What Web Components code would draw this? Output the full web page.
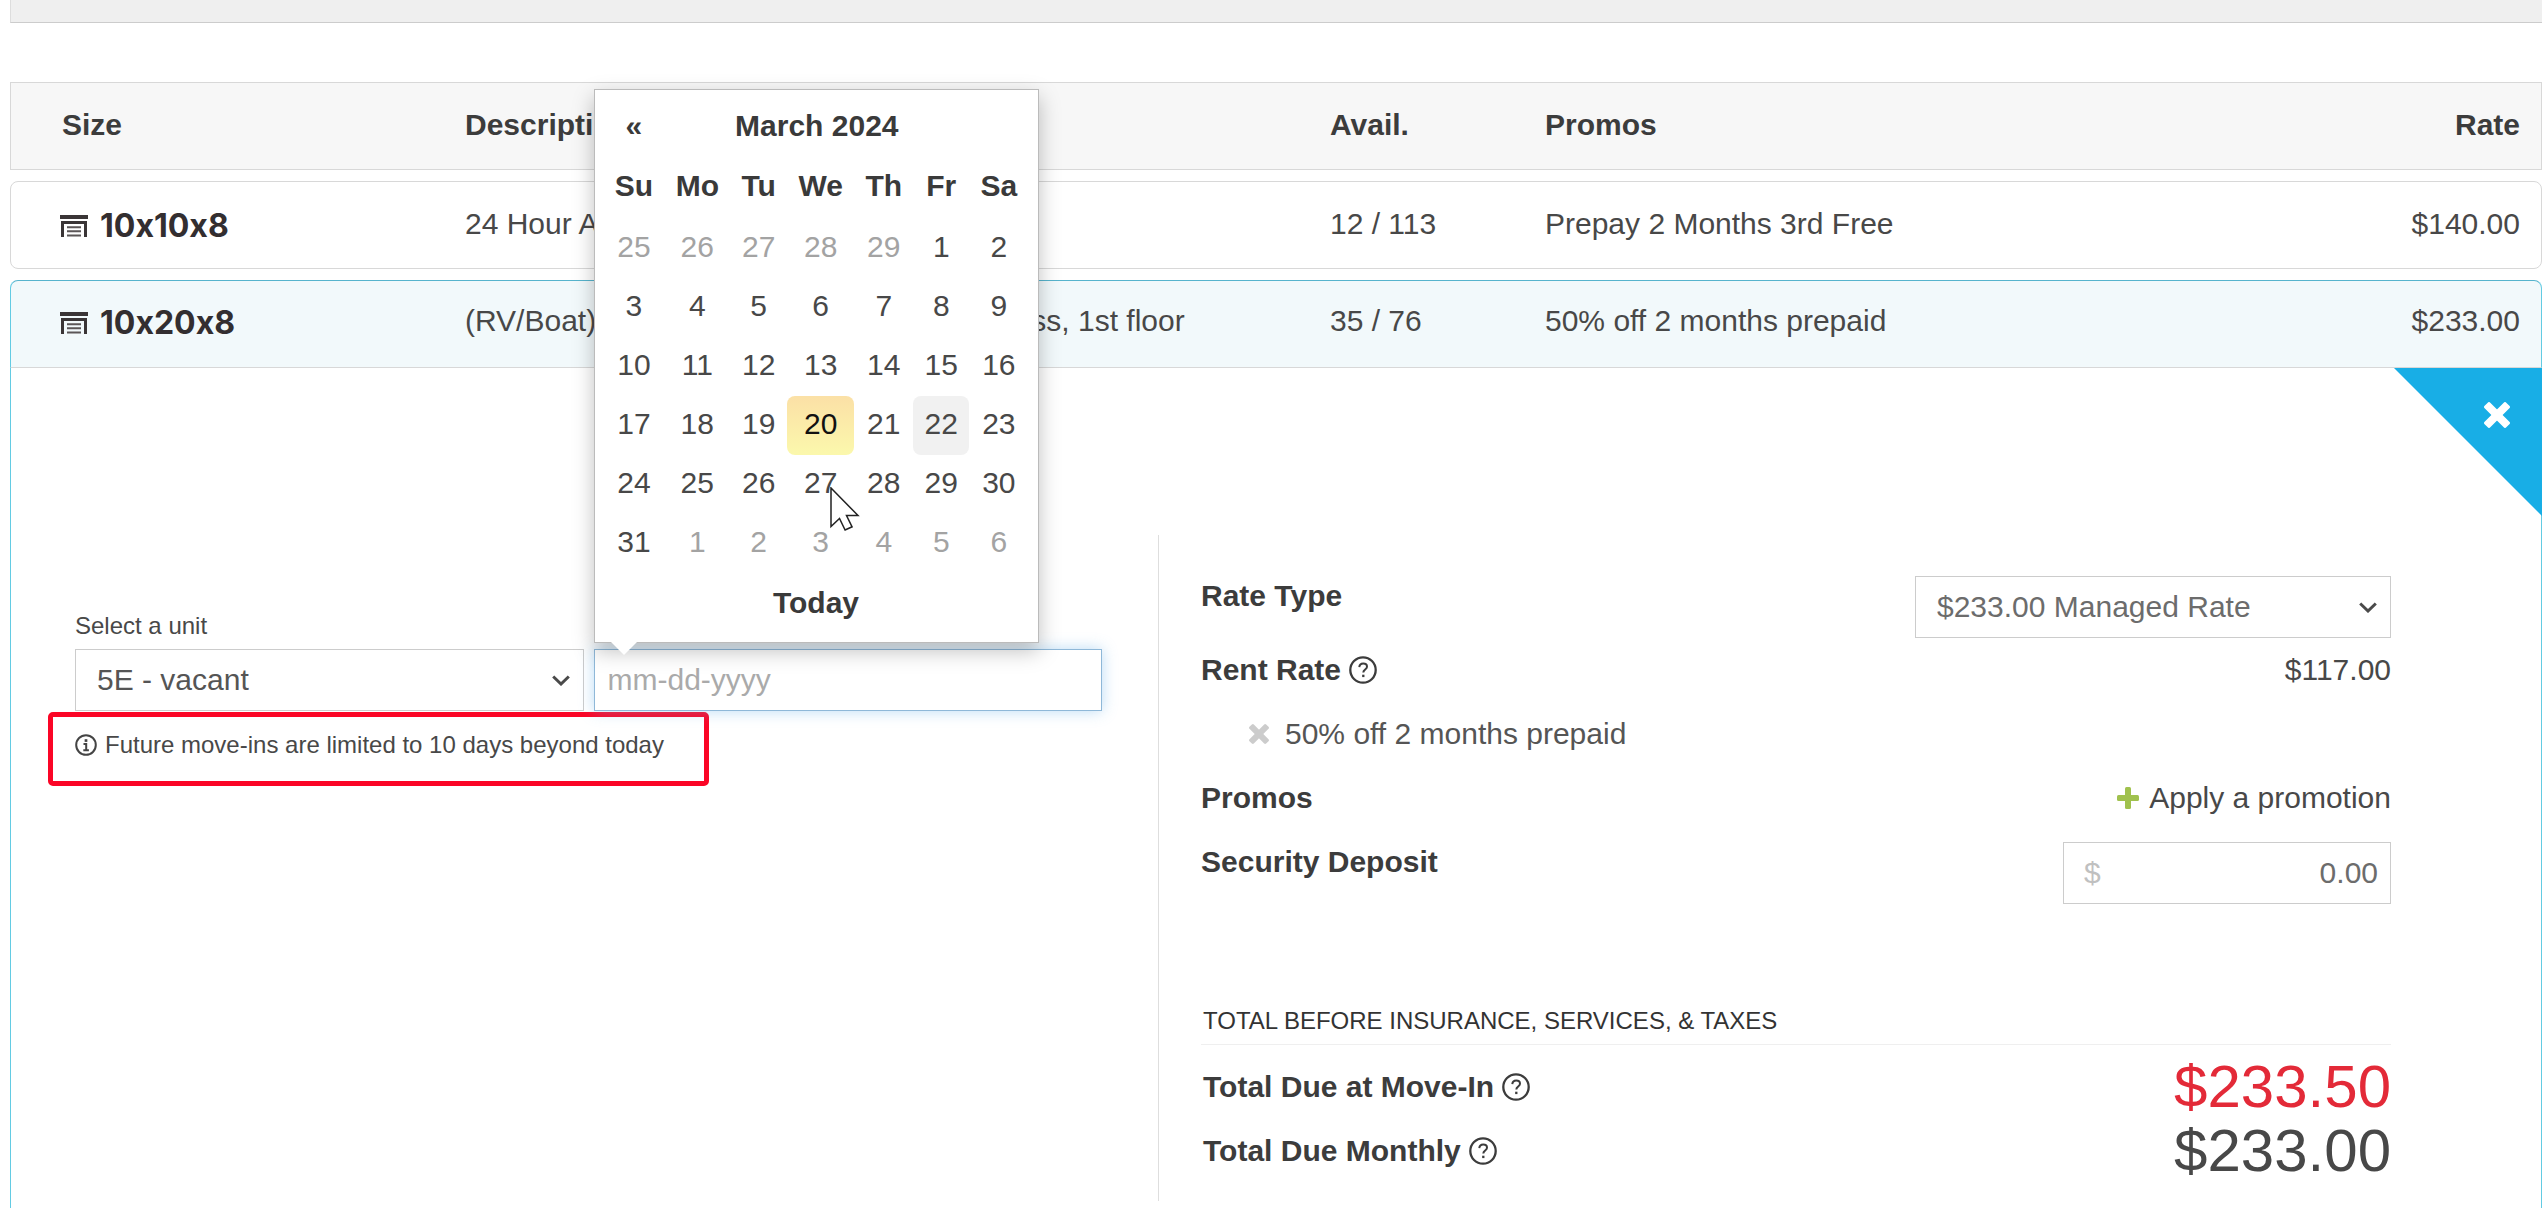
<!DOCTYPE html>
<html lang="en">
<head>
<meta charset="utf-8">
<title>Available Units</title>
<style>
  body {
    margin: 0;
    padding-left: 10px;
    background: #fff;
    color: #484848;
    font-family: "Liberation Sans", Arial, sans-serif;
    font-size: 30px;
    line-height: 40px;
  }
</style>
</head>
<body>
<unit-toolbar></unit-toolbar>
<unit-table>
  <move-in-panel>
    <move-in-form slot="form"></move-in-form>
    <rate-summary slot="summary"></rate-summary>
  </move-in-panel>
</unit-table>

<script>
//attach an open shadow root filled from a template string
const render = (host, html) => {
  const template = document.createElement('template');
  template.innerHTML = html;
  host.attachShadow({ mode: 'open' }).appendChild(template.content.cloneNode(true));
};

//icons
const icons = {
  door: `<svg viewBox="0 0 28 22" width="28" height="22">
    <path d="M0 0h28v4H0z" fill="#3a3536"/>
    <path d="M2.500 22V7.500h23V22" fill="none" stroke="#3a3536" stroke-width="3"/>
    <path d="M7 12.300h14M7 16.300h14M7 20.500h14" stroke="#5b5657" stroke-width="2"/>
  </svg>`,
  help: `<svg viewBox="0 0 28 28" width="28" height="28" fill="none" stroke="#3c3c3c">
    <circle cx="14" cy="14" r="12.700" stroke-width="2.300"/>
    <path d="M10.300 11.200c.2-2.400 1.700-3.700 3.900-3.700 2.300 0 3.800 1.300 3.800 3.200 0 2.800-3.700 2.900-3.700 5.800" stroke-width="2"/>
    <path d="M14.300 18.700v2.400" stroke-width="2.300"/>
  </svg>`,
  info: `<svg viewBox="0 0 22 22" width="22" height="22" fill="none" stroke="#444">
    <circle cx="11" cy="11" r="9.800" stroke-width="2"/>
    <path d="M11 5.200v2.700" stroke-width="2.700"/>
    <path d="M8.500 10h2.700v5.500M8.300 16.200h5.600" stroke-width="2"/>
  </svg>`,
  times: `<svg viewBox="0 0 26 26" width="100%" height="100%" fill="currentColor">
    <g transform="rotate(45 13 13)">
      <rect x="-2.300" y="9" width="30.600" height="8" rx="1.800"/>
      <rect x="9" y="-2.300" width="8" height="30.600" rx="1.800"/>
    </g>
  </svg>`,
  plus: `<svg viewBox="0 0 22 22" width="22" height="22" fill="#a0c14e">
    <rect x="0" y="8" width="22" height="6" rx="1.500"/>
    <rect x="8" y="0" width="6" height="22" rx="1.500"/>
  </svg>`,
  chevron: `<svg viewBox="0 0 18 11" width="18" height="11" fill="none" stroke="#4a4a4a" stroke-width="3">
    <path d="M1.200 1.500L9 9l7.800-7.500"/>
  </svg>`,
  pointer: `<svg class="pointer" viewBox="0 0 30 44" width="30" height="44">
    <path d="M1 1v38.500l8.500-8 5.600 11.500 7-3.200-5.600-11.300H28z" fill="#fff" stroke="#222" stroke-width="1.500"/>
  </svg>`
};

//bar above the list
class UnitToolbar extends HTMLElement {
  constructor () {
    super();
    render(this, `
    <style>
      :host {
        display: block;
        height: 22px;
        margin-bottom: 59px;
        background: #efefef;
        border-bottom: 1px solid #ccc;
        border-left: 1px solid #ddd;
      }
    </style>`);
  }
}

//table of units, the open row shows the slotted panel
class UnitTable extends HTMLElement {
  constructor () {
    super();
    render(this, `
    <style>
      :host {
        display: block;
      }
      table, thead, tbody {
        display: block;
      }
      tr {
        display: grid;
        grid-template-columns: minmax(0, 403fr) minmax(0, 865fr) minmax(0, 215fr) minmax(0, 675fr) minmax(0, 300fr);
        align-items: center;
        box-sizing: border-box;
        height: 88px;
        padding: 0 21px 3px 51px;
        border: 1px solid #d8d8d8;
        margin-bottom: 11px;
      }
      th, td {
        padding: 0;
        text-align: left;
        white-space: nowrap;
      }
      th:last-child, td:last-child {
        text-align: right;
      }
      th {
        color: #3c3c3c;
      }
      thead tr {
        background: #f7f7f7;
      }
      tbody tr {
        border-radius: 8px;
      }
      .active {
        margin: 0;
        background: #f2f9fb;
        border-color: #57b4cd #63cbe3 #d8d8d8;
        border-radius: 8px 8px 0 0;
        padding-bottom: 6px;
      }
      .detail {
        display: block;
        height: auto;
        margin: 0;
        padding: 0;
        border: solid #63cbe3;
        border-width: 0 1px;
        border-radius: 0;
      }
      .detail td {
        display: block;
        text-align: left;
        white-space: normal;
      }
      .size {
        display: flex;
        align-items: center;
        gap: 12px;
        margin-left: -2px;
        padding-top: 4px;
        font: 700 32px/40px Inter, sans-serif;
        /* Inter turns the x between digits into a multiply sign */
        font-feature-settings: "calt" 0;
        color: #332e30;
      }
    </style>
    <table>
      <thead>
        <tr><th>Size</th><th>Description</th><th>Avail.</th><th>Promos</th><th>Rate</th></tr>
      </thead>
      <tbody>
        <tr>
          <td><div class="size">${icons.door}<span>10x10x8</span></div></td>
          <td>24 Hour Access</td>
          <td>12 / 113</td>
          <td>Prepay 2 Months 3rd Free</td>
          <td>$140.00</td>
        </tr>
        <tr class="active">
          <td><div class="size">${icons.door}<span>10x20x8</span></div></td>
          <td>(RV/Boat) Drive-Up Outside, 24 Hour Access, 1st floor</td>
          <td>35 / 76</td>
          <td>50% off 2 months prepaid</td>
          <td>$233.00</td>
        </tr>
        <tr class="detail"><td><slot></slot></td></tr>
      </tbody>
    </table>`);
  }
}

//two columns under the open row, with the close corner
class MoveInPanel extends HTMLElement {
  constructor () {
    super();
    render(this, `
    <style>
      :host {
        display: grid;
        grid-template-columns: 1147fr 1383fr;
        position: relative;
        padding: 167px 0 7px;
      }
      .form {
        padding: 75px 56px 0 64px;
      }
      .summary {
        padding: 41px 150px 18px 42px;
        border-left: 1px solid #dedede;
      }
      .close {
        position: absolute;
        top: 0;
        right: -1px;
        width: 148px;
        height: 148px;
        box-sizing: border-box;
        margin: 0;
        padding: 34px 32px 88px 90px;
        border: 0;
        color: #fff;
        background: #18aee6;
        clip-path: polygon(0 0, 100% 0, 100% 100%);
        cursor: pointer;
      }
      .close svg {
        display: block;
      }
    </style>
    <div class="form"><slot name="form"></slot></div>
    <div class="summary"><slot name="summary"></slot></div>
    <button class="close" aria-label="Close">${icons.times}</button>`);
  }
}

//month calendar popup
class MonthCalendar extends HTMLElement {
  constructor () {
    super();
    const days = ['Su', 'Mo', 'Tu', 'We', 'Th', 'Fr', 'Sa'];
    let rows = '';
    for (let week = 0; week < 6; week++) {
      rows += '<tr>';
      for (let day = 0; day < 7; day++) {
        const date = new Date(2024, 1, 25 + week * 7 + day);
        const num = date.getDate();
        let cls = '';
        if (date.getMonth() !== 2) cls = 'other';
        else if (num === 20) cls = 'today';
        else if (num === 22) cls = 'focused';
        rows += `<td><button class="${cls}">${num}</button></td>`;
      }
      rows += '</tr>';
    }
    render(this, `
    <style>
      :host {
        display: block;
        box-sizing: border-box;
        width: 445px;
        padding: 9px;
        background: #fff;
        border: 1px solid #bbb;
        box-shadow: 0 8px 20px rgba(0, 0, 0, .25);
      }
      :host::after {
        content: "";
        position: absolute;
        top: 100%;
        left: 16px;
        border: solid transparent;
        border-width: 13px 13px 0;
        border-top-color: #fff;
      }
      table {
        width: 100%;
        border-spacing: 0;
      }
      th, td {
        padding: 0;
        text-align: center;
      }
      th {
        box-sizing: border-box;
        height: 60px;
        padding: 0 11px 6px;
        color: #3a3a3a;
      }
      tfoot th {
        padding-bottom: 0;
      }
      button {
        display: block;
        width: 100%;
        height: 59px;
        margin: 0;
        padding: 0 11px 4px;
        border: 0;
        border-radius: 8px;
        background: none;
        font: inherit;
        color: #484848;
        cursor: pointer;
      }
      th button {
        height: 54px;
        padding: 0;
        font-weight: 700;
        color: #3a3a3a;
      }
      .other {
        color: #a3a3a3;
      }
      .today {
        color: #111;
        background: linear-gradient(#fbe0a6, #fbf8ac);
      }
      .focused {
        background: #f1f1f1;
      }
      .pointer {
        position: absolute;
        left: 235px;
        top: 397px;
      }
    </style>
    <table>
      <thead>
        <tr><th><button aria-label="Previous month">«</button></th><th colspan="5">March 2024</th><th></th></tr>
        <tr>${days.map(d => `<th>${d}</th>`).join('')}</tr>
      </thead>
      <tbody>${rows}</tbody>
      <tfoot>
        <tr><th colspan="7"><button>Today</button></th></tr>
      </tfoot>
    </table>
    ${icons.pointer}`);
  }
}

const fieldStyle = `
      .select {
        display: grid;
        align-items: center;
      }
      .select > * {
        grid-area: 1 / 1;
      }
      .select svg {
        justify-self: end;
        margin-right: 14px;
        pointer-events: none;
      }
      select, input {
        box-sizing: border-box;
        width: 100%;
        height: 62px;
        margin: 0;
        border: 1px solid #ccc;
        border-radius: 0;
        background: #fff;
        font: inherit;
        outline: 0;
      }
      select {
        appearance: none;
        padding: 0 40px 0 21px;
        color: #555;
      }
`;

//unit and date pickers
class MoveInForm extends HTMLElement {
  constructor () {
    super();
    render(this, `
    <style>
      :host {
        display: block;
      }
      ${fieldStyle}
      .fields {
        display: grid;
        grid-template-columns: 1fr 1fr;
        gap: 10px;
      }
      label {
        display: block;
        margin-bottom: 7px;
        font-size: 24px;
        line-height: 32px;
      }
      .date {
        position: relative;
      }
      .date input {
        display: block;
        padding: 0 13px;
        border-color: #8fb8d8;
        box-shadow: 0 0 14px rgba(102, 175, 233, .45);
      }
      input::placeholder {
        color: #aaa;
        opacity: 1;
      }
      month-calendar {
        position: absolute;
        left: 0;
        bottom: calc(100% + 6px);
        z-index: 10;
      }
      .note {
        display: flex;
        align-items: center;
        gap: 8px;
        width: fit-content;
        margin: 1px 0 0 -27px;
        padding: 12px 40px 20px 22px;
        border: 5px solid #fb0526;
        border-radius: 5px;
        font-size: 24px;
        line-height: 32px;
      }
    </style>
    <div class="fields">
      <div>
        <label for="unit">Select a unit</label>
        <div class="select">
          <select id="unit"><option>5E - vacant</option></select>
          ${icons.chevron}
        </div>
      </div>
      <div>
        <label for="date">Move-in date</label>
        <div class="date">
          <input id="date" type="text" placeholder="mm-dd-yyyy">
          <month-calendar></month-calendar>
        </div>
      </div>
    </div>
    <div class="note">${icons.info}<span>Future move-ins are limited to 10 days beyond today</span></div>`);
  }
}

//rates and totals
class RateSummary extends HTMLElement {
  constructor () {
    super();
    render(this, `
    <style>
      :host {
        display: block;
      }
      ${fieldStyle}
      .row {
        display: flex;
        justify-content: space-between;
        align-items: flex-start;
        box-sizing: border-box;
        min-height: 64px;
        padding-bottom: 12px;
      }
      .name {
        display: flex;
        align-items: center;
        gap: 8px;
        font-weight: 700;
        color: #3c3c3c;
      }
      .row .select {
        width: 40%;
      }
      .row select {
        color: #6c6c6c;
      }
      .promo {
        justify-content: flex-start;
        gap: 16px;
        padding-left: 48px;
        color: #555;
      }
      .promo button {
        width: 20px;
        height: 40px;
        padding: 0;
        border: 0;
        background: none;
        color: #ccc;
        cursor: pointer;
      }
      .promo button svg {
        display: block;
      }
      a {
        display: flex;
        align-items: center;
        gap: 10px;
        color: inherit;
        text-decoration: none;
      }
      .money {
        display: flex;
        align-items: center;
        box-sizing: border-box;
        width: 328px;
        height: 62px;
        padding-left: 20px;
        border: 1px solid #ccc;
        color: #c0c0c0;
      }
      .money input {
        height: 60px;
        padding: 0 12px;
        border: 0;
        text-align: right;
        color: #6c6c6c;
      }
      h3 {
        margin: 89px 0 10px;
        padding: 0 0 7px 2px;
        border-bottom: 1px solid #efefef;
        font-size: 24px;
        font-weight: 400;
        line-height: 32px;
        text-transform: uppercase;
        color: #333;
      }
      .total {
        display: flex;
        justify-content: space-between;
        align-items: center;
        padding-left: 2px;
      }
      .amount {
        font-size: 60px;
        line-height: 64px;
      }
      .due {
        color: #e32a38;
      }
    </style>
    <div class="row">
      <label class="name" for="rate">Rate Type</label>
      <div class="select">
        <select id="rate"><option>$233.00 Managed Rate</option></select>
        ${icons.chevron}
      </div>
    </div>
    <div class="row">
      <span class="name">Rent Rate ${icons.help}</span>
      <span>$117.00</span>
    </div>
    <div class="row promo">
      <button aria-label="Remove promotion">${icons.times}</button>
      <span>50% off 2 months prepaid</span>
    </div>
    <div class="row">
      <span class="name">Promos</span>
      <a href="#">${icons.plus}<span>Apply a promotion</span></a>
    </div>
    <div class="row">
      <label class="name" for="deposit">Security Deposit</label>
      <div class="money">$<input id="deposit" type="text" value="0.00"></div>
    </div>
    <h3>Total before insurance, services, &amp; taxes</h3>
    <div class="total">
      <span class="name">Total Due at Move-In ${icons.help}</span>
      <span class="amount due">$233.50</span>
    </div>
    <div class="total">
      <span class="name">Total Due Monthly ${icons.help}</span>
      <span class="amount">$233.00</span>
    </div>`);
  }
}

customElements.define('unit-toolbar', UnitToolbar);
customElements.define('unit-table', UnitTable);
customElements.define('move-in-panel', MoveInPanel);
customElements.define('month-calendar', MonthCalendar);
customElements.define('move-in-form', MoveInForm);
customElements.define('rate-summary', RateSummary);
</script>
</body>
</html>
